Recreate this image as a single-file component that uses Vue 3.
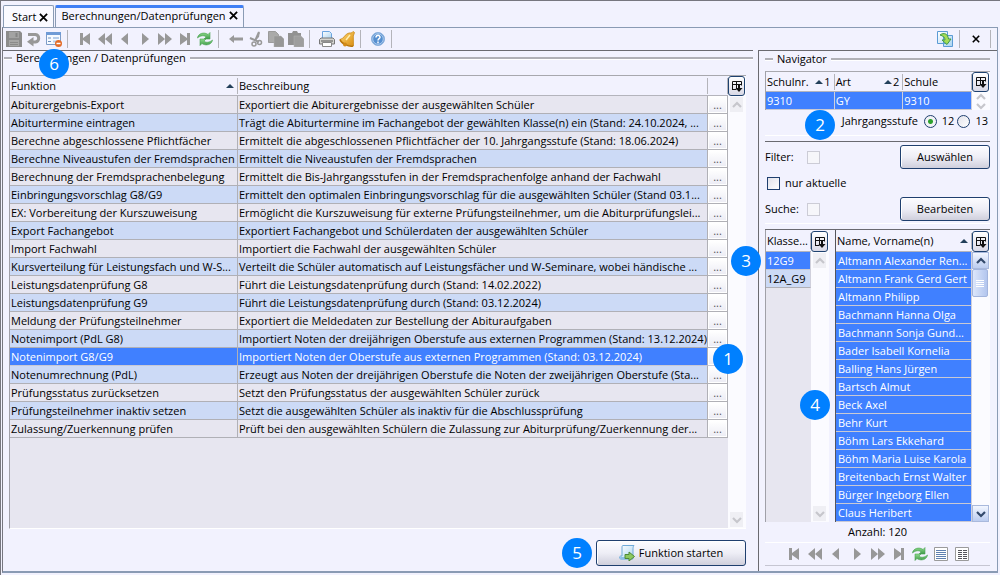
<script setup>
import { ref } from 'vue'

const functions = ref([
  ['Abiturergebnis-Export', 'Exportiert die Abiturergebnisse der ausgewählten Schüler'],
  ['Abiturtermine eintragen', 'Trägt die Abiturtermine im Fachangebot der gewählten Klasse(n) ein (Stand: 24.10.2024, ...'],
  ['Berechne abgeschlossene Pflichtfächer', 'Ermittelt die abgeschlossenen Pflichtfächer der 10. Jahrgangsstufe (Stand: 18.06.2024)'],
  ['Berechne Niveaustufen der Fremdsprachen', 'Ermittelt die Niveaustufen der Fremdsprachen'],
  ['Berechnung der Fremdsprachenbelegung', 'Ermittelt die Bis-Jahrgangsstufen in der Fremdsprachenfolge anhand der Fachwahl'],
  ['Einbringungsvorschlag G8/G9', 'Ermittelt den optimalen Einbringungsvorschlag für die ausgewählten Schüler (Stand 03.1...'],
  ['EX: Vorbereitung der Kurszuweisung', 'Ermöglicht die Kurszuweisung für externe Prüfungsteilnehmer, um die Abiturprüfungslei...'],
  ['Export Fachangebot', 'Exportiert Fachangebot und Schülerdaten der ausgewählten Schüler'],
  ['Import Fachwahl', 'Importiert die Fachwahl der ausgewählten Schüler'],
  ['Kursverteilung für Leistungsfach und W-S...', 'Verteilt die Schüler automatisch auf Leistungsfächer und W-Seminare, wobei händische ...'],
  ['Leistungsdatenprüfung G8', 'Führt die Leistungsdatenprüfung durch (Stand: 14.02.2022)'],
  ['Leistungsdatenprüfung G9', 'Führt die Leistungsdatenprüfung durch (Stand: 03.12.2024)'],
  ['Meldung der Prüfungsteilnehmer', 'Exportiert die Meldedaten zur Bestellung der Abituraufgaben'],
  ['Notenimport (PdL G8)', 'Importiert Noten der dreijährigen Oberstufe aus externen Programmen (Stand: 13.12.2024)'],
  ['Notenimport G8/G9', 'Importiert Noten der Oberstufe aus externen Programmen (Stand: 03.12.2024)'],
  ['Notenumrechnung (PdL)', 'Erzeugt aus Noten der dreijährigen Oberstufe die Noten der zweijährigen Oberstufe (Sta...'],
  ['Prüfungsstatus zurücksetzen', 'Setzt den Prüfungsstatus der ausgewählten Schüler zurück'],
  ['Prüfungsteilnehmer inaktiv setzen', 'Setzt die ausgewählten Schüler als inaktiv für die Abschlussprüfung'],
  ['Zulassung/Zuerkennung prüfen', 'Prüft bei den ausgewählten Schülern die Zulassung zur Abiturprüfung/Zuerkennung der...'],
])
const selected = ref(14)
const classes = ['12G9', '12A_G9']
const names = [
  'Altmann Alexander Ren...', 'Altmann Frank Gerd Gert', 'Altmann Philipp', 'Bachmann Hanna Olga',
  'Bachmann Sonja Gund...', 'Bader Isabell Kornelia', 'Balling Hans Jürgen', 'Bartsch Almut', 'Beck Axel',
  'Behr Kurt', 'Böhm Lars Ekkehard', 'Böhm Maria Luise Karola', 'Breitenbach Ernst Walter',
  'Bürger Ingeborg Ellen', 'Claus Heribert',
]
const toolGroups = [
  ['save', 'undo', 'form'],
  ['first', 'rewind', 'prev', 'next', 'forward', 'last', 'refresh'],
  ['back', 'cut', 'copy', 'paste'],
  ['print', 'bell'],
  ['help'],
]
const navTools = ['first', 'rewind', 'prev', 'next', 'forward', 'last', 'refresh', 'list', 'details']
const year = ref('12')
</script>

<template>
  <div class="app">
    <svg class="sprite" aria-hidden="true">
      <defs>
        <linearGradient id="g-green" x1="0" y1="0" x2="0" y2="1"><stop offset="0" stop-color="#8fdc8c" /><stop offset="1" stop-color="#3f9a48" /></linearGradient>
        <linearGradient id="g-gold" x1="0" y1="0" x2="1" y2="1"><stop offset="0" stop-color="#ffd873" /><stop offset="1" stop-color="#d98c10" /></linearGradient>
        <linearGradient id="g-blue" x1="0" y1="0" x2="1" y2="1"><stop offset="0" stop-color="#ffffff" /><stop offset="1" stop-color="#a9d3f0" /></linearGradient>
      </defs>
      <symbol id="save" viewBox="0 0 16 16"><path d="M0 0h14l2 2v14H0z" fill="#8c8c8c" /><path d="M3 1h10v6H3z" fill="#a3a3a3" /><path d="M9.500 2h2v4h-2z" fill="#858585" /><path d="M3 9h10v6H3z" fill="#a6a6a6" /><path d="M4 11.500h8M4 13.500h8" stroke="#8a8a8a" /></symbol>
      <symbol id="undo" viewBox="0 0 16 16"><path d="M2 3.500h7.500a3.800 3.800 0 0 1 0 7.500H6" fill="none" stroke="#989898" stroke-width="3" /><path d="M7.500 6v9.500L1 10.800z" fill="#989898" /></symbol>
      <symbol id="form" viewBox="0 0 16 16"><path d="M.5 1.500h14v12H.5z" fill="#f6faff" stroke="#7d9cc8" /><path d="M0 1h15v3H0z" fill="#6f9bd6" /><path d="M2 7h3M2 10.500h3" stroke="#6d8fbe" /><path d="M7 6h6v2H7zM7 9.500h4v2H7z" fill="#b6cdea" /><circle cx="12.500" cy="12.500" r="3.500" fill="#e36a25" /><path d="M10.500 12.500h4" stroke="#fff" stroke-width="1.500" /></symbol>
      <symbol id="first" viewBox="0 0 16 16"><path d="M3 2h3v5l7-5v12L6 9v5H3z" fill="#989898" /></symbol>
      <symbol id="last" viewBox="0 0 16 16"><path d="M13 2h-3v5L3 2v12l7-5v5h3z" fill="#989898" /></symbol>
      <symbol id="rewind" viewBox="0 0 16 16"><path d="M8 2v12L1 8zM15 2v12L8 8z" fill="#989898" /></symbol>
      <symbol id="forward" viewBox="0 0 16 16"><path d="M1 2v12l7-6zM8 2v12l7-6z" fill="#989898" /></symbol>
      <symbol id="prev" viewBox="0 0 16 16"><path d="M11 2v12L4 8z" fill="#989898" /></symbol>
      <symbol id="next" viewBox="0 0 16 16"><path d="M5 2v12l7-6z" fill="#989898" /></symbol>
      <symbol id="refresh" viewBox="0 0 16 16"><g fill="url(#g-green)" stroke="#4ba254" stroke-width=".6"><path d="M.5 7C1 2.500 7 .5 11 3.500L13 1.500V8H7l2-2C7 4 3.500 4.500.5 7z" /><path d="M15.500 9c-.5 4.500-6.500 6.500-10.500 3.500L3 14.500V8h6l-2 2c2 2 5.500 1.500 8.500-1z" /></g></symbol>
      <symbol id="back" viewBox="0 0 16 16"><path d="M1 8l5-4v2.500h9v3H6V12z" fill="#999" /></symbol>
      <symbol id="cut" viewBox="0 0 16 16"><path d="M11 1L7 10M2 7l9 4" stroke="#999" stroke-width="2" /><path d="M12 0l-1 6-3 3z" fill="#999" /><circle cx="6" cy="13" r="2" fill="none" stroke="#999" stroke-width="1.500" /><circle cx="11.500" cy="11.500" r="2" fill="none" stroke="#999" stroke-width="1.500" /></symbol>
      <symbol id="copy" viewBox="0 0 16 16"><path d="M.5.5h7l3 3v8H.5z" fill="#aaa" stroke="#9b9b9b" /><path d="M6 5h7l3 3v8H6z" fill="#979797" stroke="#b0b0b0" stroke-width=".5" /></symbol>
      <symbol id="paste" viewBox="0 0 16 16"><path d="M0 2h4l1-2h4l1 2h3v12H0z" fill="#929292" /><path d="M6 5h7l3 3v8H6z" fill="#9e9e9e" stroke="#b0b0b0" stroke-width=".5" /></symbol>
      <symbol id="print" viewBox="0 0 16 16"><path d="M3.500 8V.5h7l2 2V8z" fill="url(#g-blue)" stroke="#6ba4df" /><path d="M.5 8.500L2 7h12l1.500 1.500V13H.5z" fill="#d4d4d0" stroke="#777" /><path d="M2 10h12" stroke="#555" /><path d="M3.500 11.500h9v4h-9z" fill="#fff" stroke="#888" /></symbol>
      <symbol id="bell" viewBox="0 0 16 16"><path d="M14 .5l1.500 1-1.200 3.500.2 10C9 15 3 12 1 8.500 5 8 6 2.500 10 2c2 0 3 0 4-1.500z" fill="url(#g-gold)" stroke="#c98a1c" stroke-width=".8" /><path d="M1 8.500c1 4 9 7.500 13 6.500" fill="none" stroke="#b87408" stroke-width="1.500" /><circle cx="6" cy="13.500" r="2" fill="#d28a18" /><path d="M11 4L7 9" stroke="#fff0b0" stroke-width="1.500" /></symbol>
      <symbol id="help" viewBox="0 0 16 16"><circle cx="8" cy="8" r="6.500" fill="#568fd0" stroke="#8cb1dd" /><circle cx="8" cy="8" r="5.300" fill="none" stroke="#c5dcf5" stroke-width=".8" /><path d="M6 6.500c0-3 4.200-2.700 4 0C9.900 7.700 8 7.800 8 9.500M8 10.500v1.700" fill="none" stroke="#fff" stroke-width="1.500" /></symbol>
      <symbol id="list" viewBox="0 0 16 16"><path d="M1.500 1.500h13v13h-13z" fill="#fff" stroke="#9b9b9b" /><path d="M3 4.500h10M3 6.500h10M3 8.500h10M3 10.500h10M3 12.500h10" stroke="#5f80b0" /></symbol>
      <symbol id="details" viewBox="0 0 16 16"><path d="M1.500 1.500h13v13h-13z" fill="#fff" stroke="#9b9b9b" /><path d="M4 4.500h4M4 6.500h4M4 8.500h4M4 10.500h4M4 12.500h4M9 4.500h4M9 6.500h4M9 8.500h4M9 10.500h4M9 12.500h4" stroke="#55555c" /></symbol>
      <symbol id="export" viewBox="0 0 16 16"><path d="M.5.5h10v12H.5zM6.500 4.500h9v11h-9z" fill="url(#g-blue)" stroke="#5b9bd5" /><path d="M3 4c4-3 8-1 8.500 4H14l-4 5.500L5 9h3C8 6 6 5 3 4z" fill="#a5dc55" stroke="#3f9a48" /></symbol>
      <symbol id="run" viewBox="0 0 16 16"><path d="M4 .5h11c-1 1-1 3-1 4.500v9H2c-2 0-2-3 0-3h1V3c0-1.500 0-2.500 1-2.500z" fill="url(#g-blue)" stroke="#6faad8" /><path d="M1 12h8v2.500H2z" fill="#8bbfe6" /><path d="M6 9.500h4V7l5.500 4.500L10 16v-2.500H6z" fill="#8cc860" stroke="#4d8a36" /></symbol>
      <symbol id="columns" viewBox="0 0 12 12"><path d="M1.500 9.500v-8h9v4M1 4.500h10M1 9.500h4M5.500 1.500v8" fill="none" stroke="#111" /><path d="M7 5h2v3h2.500L8 12 4.500 8H7z" fill="#111" /></symbol>
      <symbol id="up" viewBox="0 0 10 10"><path d="M1 7l4-4 4 4" fill="none" stroke="currentColor" stroke-width="2.200" /></symbol>
      <symbol id="down" viewBox="0 0 10 10"><path d="M1 3l4 4 4-4" fill="none" stroke="currentColor" stroke-width="2.200" /></symbol>
      <symbol id="close" viewBox="0 0 10 10"><path d="M1 1l8 8M9 1L1 9" stroke="#000" stroke-width="2" /></symbol>
      <symbol id="sort" viewBox="0 0 8 4"><path d="M0 4l4-4 4 4z" fill="#23405a" /></symbol>
    </svg>

    <nav class="tabs">
      <div class="tab"><a href="#">Start</a><button aria-label="Start schließen"><svg class="x"><use href="#close" /></svg></button></div>
      <div class="tab active"><a href="#">Berechnungen/Datenprüfungen</a><button aria-label="Tab schließen"><svg class="x"><use href="#close" /></svg></button></div>
    </nav>

    <div class="frame">
      <header class="toolbar">
        <div class="tools">
          <template v-for="group in toolGroups" :key="group[0]">
            <button v-for="t in group" :key="t" class="tool" :aria-label="t">
              <svg class="icon"><use :href="'#' + t" /></svg>
              <span v-if="t === 'form'" class="badge b6">6</span>
            </button>
            <i class="sep"></i>
          </template>
        </div>
        <div class="tools end">
          <button class="tool" aria-label="export"><svg class="icon"><use href="#export" /></svg></button>
          <i class="sep"></i>
          <button class="tool" aria-label="Schließen"><svg class="x small"><use href="#close" /></svg></button>
          <i class="sep"></i>
        </div>
      </header>

      <main class="panes">
        <section class="pane left">
          <h2 class="legend">Berechnungen / Datenprüfungen</h2>
          <div class="box functions">
            <div class="grid">
              <table>
                <colgroup><col class="c-name"><col><col class="c-more"></colgroup>
                <thead>
                  <tr>
                    <th><span class="head">Funktion<svg class="sort"><use href="#sort" /></svg></span></th>
                    <th><span class="head">Beschreibung</span></th>
                    <th><span class="head"></span></th>
                  </tr>
                </thead>
                <tbody>
                  <tr v-for="(f, i) in functions" :key="f[0]" :class="{ selected: i === selected }" @click="selected = i">
                    <td>{{ f[0] }}</td>
                    <td>{{ f[1] }}</td>
                    <td class="more"><button :aria-label="f[0] + ' Details'">...</button><span v-if="i === 14" class="badge b1">1</span></td>
                  </tr>
                </tbody>
              </table>
            </div>
            <div class="side">
              <button class="columns" aria-label="Spalten"><svg><use href="#columns" /></svg></button>
              <div class="track off">
                <button aria-label="Nach oben"><svg><use href="#up" /></svg></button>
                <button aria-label="Nach unten"><svg><use href="#down" /></svg></button>
              </div>
            </div>
          </div>
          <footer class="actions">
            <span class="badge">5</span>
            <button class="btn start"><svg class="icon"><use href="#run" /></svg>Funktion starten</button>
          </footer>
        </section>

        <aside class="pane right">
          <h2 class="legend">Navigator</h2>
          <div class="nav-body">
            <div class="box schools">
              <div class="grid">
                <table>
                  <thead>
                    <tr>
                      <th><span class="head">Schulnr.<span class="order"><svg class="sort"><use href="#sort" /></svg>1</span></span></th>
                      <th><span class="head">Art<span class="order"><svg class="sort"><use href="#sort" /></svg>2</span></span></th>
                      <th><span class="head">Schule</span></th>
                    </tr>
                  </thead>
                  <tbody><tr class="selected"><td>9310</td><td>GY</td><td>9310</td></tr></tbody>
                </table>
              </div>
              <div class="side">
                <button class="columns" aria-label="Spalten"><svg><use href="#columns" /></svg></button>
                <div class="track off tiny">
                  <button aria-label="Nach oben"><svg><use href="#up" /></svg></button>
                  <button aria-label="Nach unten"><svg><use href="#down" /></svg></button>
                </div>
              </div>
            </div>

            <div class="years">
              <span class="badge b2">2</span>
              <span>Jahrgangsstufe</span>
              <label><input v-model="year" type="radio" name="year" value="12">12</label>
              <label><input v-model="year" type="radio" name="year" value="13">13</label>
            </div>

            <div class="filters">
              <label class="caption" for="filter">Filter:</label>
              <input id="filter" type="checkbox" disabled>
              <button class="btn">Auswählen</button>
              <label class="current"><input type="checkbox">nur aktuelle</label>
              <label class="caption" for="search">Suche:</label>
              <input id="search" type="checkbox" disabled>
              <button class="btn">Bearbeiten</button>
            </div>

            <div class="lists">
              <div class="box classes">
                <span class="badge b3">3</span>
                <div class="grid">
                  <table>
                    <thead><tr><th><span class="head">Klasse...</span></th></tr></thead>
                    <tbody><tr v-for="(c, i) in classes" :key="c" :class="{ selected: i === 0 }"><td>{{ c }}</td></tr></tbody>
                  </table>
                </div>
                <div class="side">
                  <button class="columns" aria-label="Spalten"><svg><use href="#columns" /></svg></button>
                  <div class="track off">
                    <button aria-label="Nach oben"><svg><use href="#up" /></svg></button>
                    <button aria-label="Nach unten"><svg><use href="#down" /></svg></button>
                  </div>
                </div>
              </div>
              <div class="box names">
                <span class="badge b4">4</span>
                <div class="grid">
                  <table>
                    <thead><tr><th><span class="head">Name, Vorname(n)<svg class="sort"><use href="#sort" /></svg></span></th></tr></thead>
                    <tbody><tr v-for="n in names" :key="n" class="selected"><td>{{ n }}</td></tr></tbody>
                  </table>
                </div>
                <div class="side">
                  <button class="columns" aria-label="Spalten"><svg><use href="#columns" /></svg></button>
                  <div class="track">
                    <button aria-label="Nach oben"><svg><use href="#up" /></svg></button>
                    <div class="thumb"><i></i><i></i><i></i><i></i></div>
                    <button aria-label="Nach unten"><svg><use href="#down" /></svg></button>
                  </div>
                </div>
              </div>
            </div>

            <p class="count">Anzahl: 120</p>
            <div class="nav-tools">
              <button v-for="t in navTools" :key="t" class="tool" :aria-label="t"><svg class="icon"><use :href="'#' + t" /></svg></button>
            </div>
          </div>
        </aside>
      </main>
    </div>
  </div>
</template>

<style>
body { margin: 0; background: #f2f2fe; }
</style>

<style scoped>
* { box-sizing: border-box; }
.app {
  height: 100vh;
  display: flex;
  flex-direction: column;
  padding: 0 2px 2px 1px;
  background: #f2f2fe;
  border-top: 1px solid #77777f;
  border-left: 1px solid #77777f;
  font: 11px/16px "Open Sans", "Noto Sans", sans-serif;
  color: #000;
}
.sprite { position: absolute; width: 0; height: 0; }
button { font: inherit; color: inherit; padding: 0; border: 0; background: none; }
svg { display: block; }
a { color: inherit; text-decoration: none; }

.tabs { display: flex; gap: 1px; padding: 4px 0 0 1px; height: 26px; flex: none; }
.tab {
  display: flex; align-items: center; gap: 3px; padding: 1px 5px 0 8px;
  border: 1px solid #8a9bb4; border-bottom: 0; border-radius: 2px 2px 0 0; background: #fafaff;
}
.tab.active { border-top: 3px solid #3f7ff5; padding: 0 5px 4px 5px; background: #f4f4ff; }
.x { width: 9px; height: 9px; }
.x.small { width: 8px; height: 8px; margin: 0 auto; }

.frame {
  flex: 1; min-height: 0; display: flex; flex-direction: column;
  border: 1px solid #8a9bb4; border-bottom-width: 2px; border-left-color: #77777f;
}
.toolbar { display: flex; justify-content: space-between; height: 22px; flex: none; }
.tools { display: flex; align-items: center; padding-left: 1px; }
.tool { position: relative; width: 20px; height: 20px; flex: none; display: flex; align-items: center; justify-content: center; }
.icon { width: 16px; height: 16px; flex: none; }
.sep { width: 1px; height: 18px; margin: 0 7px 0 3px; background: #b4b4ba; }
.tools.end .sep { margin: 0 6px 0 4px; }

.panes { flex: 1; min-height: 0; display: grid; grid-template-columns: minmax(0, 1fr) 239px; gap: 5px; }
.pane { border-top: 1px solid #6a6a70; display: flex; flex-direction: column; min-height: 0; min-width: 0; }
.left { padding-left: 1px; }
.right { border-left: 1px solid #6a6a70; padding: 0 7px 5px 6px; }
.legend { margin: 0; font: inherit; display: flex; align-items: center; gap: 4px; height: 16px; flex: none; }
.legend::before, .legend::after { content: ""; height: 2px; background: #b0b0b6; border-bottom: 1px solid #fff; }
.legend::before { width: 8px; }
.legend::after { flex: 1; }
.left .legend { height: 14px; }

.box { display: flex; position: relative; border-left: 1px solid #a0a0a8; min-height: 0; }
.functions { flex: 1; margin: 10px 7px 0 5px; border-top: 1px solid #a8a8ae; border-bottom: 1px solid #fff; }
.grid { flex: 1; min-width: 0; overflow: hidden; background: #e7e6f0; }
.functions .grid { overflow: visible; }
table { width: 100%; table-layout: fixed; border-collapse: separate; border-spacing: 0; }
.c-name { width: 228px; }
.c-more { width: 20px; }
th { padding: 0; height: 20px; font-weight: normal; text-align: left; background: #f2f2fe; border-bottom: 1px solid #b4b4bc; }
.head { display: flex; align-items: center; justify-content: space-between; height: 16px; padding: 0 3px 0 1px; border-right: 1px solid #b4b4ba; }
.order { display: flex; align-items: center; gap: 1px; }
.sort { width: 8px; height: 4px; }
td { position: relative; height: 18px; line-height: 17px; padding: 0 0 0 1px; white-space: nowrap; overflow: hidden; border-bottom: 1px solid #b0b0b6; border-right: 1px solid #b0b0b6; }
tr:nth-child(even) td { background: #ccdaf6; }
tr.selected td { background: #4080ff; color: #fff; border-bottom-color: #c9c9d4; }
.functions td.more, .functions tr.selected td.more { overflow: visible; padding: 0; background: #f8f8fc; color: #333; }
.more button { display: block; width: 100%; height: 17px; line-height: 15px; background: linear-gradient(#fff, #ededf5); border: 1px solid #fff; text-align: center; color: #555; }
.right td { border-right-color: #d0d0dc; }
.names td { padding-left: 2px; }

.side { width: 18px; flex: none; display: flex; flex-direction: column; background: #fbfbff; }
.columns { height: 20px; width: 17px; flex: none; display: grid; place-items: center; border: 1px solid #1f4270; border-radius: 3px; background: linear-gradient(#fff, #d9d9e6); }
.columns svg { width: 12px; height: 12px; }
.track { flex: 1; display: flex; flex-direction: column; padding: 0 1px 0 0; min-height: 0; color: #33496b; }
.track button { width: 17px; height: 17px; flex: none; display: grid; place-items: center; background: linear-gradient(#f2f6ff, #bccdf0); border: 1px solid #a9b9dc; }
.track button:last-child { margin-top: auto; }
.track svg { width: 10px; height: 10px; }
.track.off { color: #c6c6cc; padding: 1px 2px; }
.track.off button { width: 13px; height: 15px; background: #efeff4; border: 0; }
.track.off.tiny { padding: 0 2px; }
.track.off.tiny button { height: 9px; background: none; }
.thumb { width: 16px; height: 28px; display: flex; flex-direction: column; align-items: center; justify-content: center; gap: 1px; background: linear-gradient(90deg, #dce6fb, #b3c6ee); border: 1px solid #a3b5dd; border-radius: 2px; }
.thumb i { width: 8px; height: 1px; background: #fff; }

.actions { display: flex; justify-content: flex-end; align-items: center; gap: 4px; padding: 9px 7px 3px 0; }
.btn { height: 24px; display: flex; align-items: center; justify-content: center; gap: 4px; border: 1px solid #1f3f6e; border-radius: 3px; background: linear-gradient(#fcfcff, #eeeef6 50%, #cfcfdc); box-shadow: inset 1px 1px 0 #fff; }
.start { width: 150px; height: 26px; }

.nav-body { flex: 1; min-height: 0; display: flex; flex-direction: column; }
.schools { margin-top: 4px; border-top: 1px solid #a8a8ae; }
.years { position: relative; display: flex; justify-content: flex-end; align-items: center; gap: 6px; height: 26px; padding: 0 2px 3px 0; border-bottom: 1px solid #fff; }
.years label { display: flex; align-items: center; gap: 5px; }
.years label + label { margin-left: -3px; }
input { appearance: none; margin: 0; width: 13px; height: 13px; border: 1px solid #1f3f6e; background: linear-gradient(135deg, #e2e2ea, #fff); }
input[type="radio"] { border-radius: 50%; }
input[type="radio"]:checked { background: radial-gradient(circle, #2da12d 0 2px, #f2f2f6 3px); }
input:disabled { border-color: #ccccd6; background: #f6f6fa; }
.filters { display: grid; grid-template-columns: 36px 1fr 90px; gap: 0 6px; align-items: center; grid-template-rows: 24px 28px 24px; margin-top: 5px; padding: 3px 0; border-top: 1px solid #6a6a70; height: 83px; border-bottom: 1px solid #fff; }
.current { grid-column: 1 / -1; display: flex; align-items: center; gap: 5px; padding-left: 2px; }
.lists { flex: 1; min-height: 0; margin-top: 5px; border-top: 1px solid #6a6a70; display: flex; gap: 6px; }
.lists .box { padding-top: 1px; }
.lists th { height: 21px; }
.lists .columns { height: 21px; }
.classes { width: 64px; }
.names { flex: 1; min-width: 0; border-left-color: #55555c; }
.count { margin: 0; text-align: center; height: 20px; line-height: 20px; }
.nav-tools { display: flex; justify-content: center; gap: 1px; border-top: 1px solid #fff; border-bottom: 1px solid #c6c6d2; height: 24px; align-items: center; }

.badge { width: 30px; height: 30px; flex: none; border-radius: 50%; background: #0080ff; color: #fff; font: 17px/30px "Open Sans", "Noto Sans", sans-serif; text-align: center; z-index: 5; }
.b1, .b2, .b3, .b4, .b6 { position: absolute; }
.b6 { left: -5px; top: 10px; top: 20px; }
.b1 { left: 5px; top: -4px; }
.b2 { left: 40px; top: 0; }
.b3 { left: -35px; top: 16px; }
.b4 { left: -36px; top: 160px; }
</style>
